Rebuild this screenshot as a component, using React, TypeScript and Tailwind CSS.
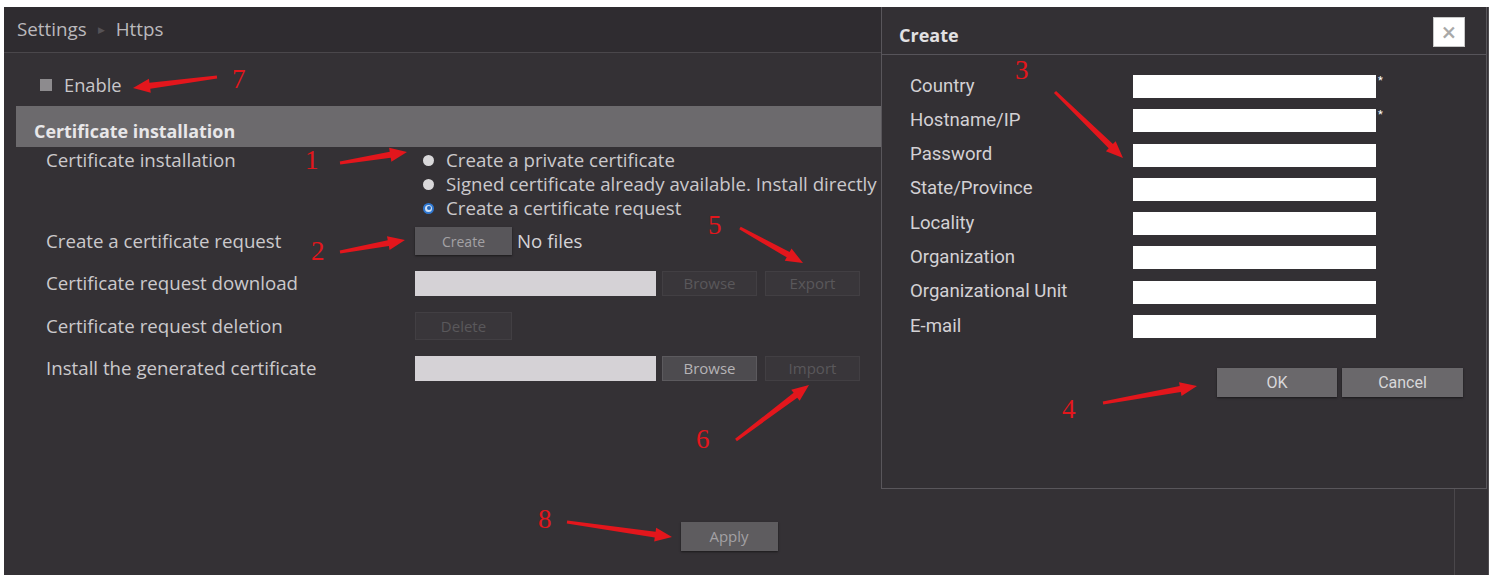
import React from 'react';

const mainFont = { fontFamily: '"Open Sans", "Liberation Sans", sans-serif' };
const dlgFont = { fontFamily: 'Roboto, "Liberation Sans", sans-serif' };

type BtnProps = { label: string; disabled?: boolean; className?: string };

const Btn = ({ label, disabled, className = '' }: BtnProps) => (
  <div
    className={`flex items-center justify-center text-[15px] ${
      disabled
        ? 'bg-[#39363a] border border-[#423f43] text-[#5a585b]'
        : 'bg-[#4d4b4f] border border-[#5c5a5e] text-[#b5b3b6]'
    } ${className}`}
  >
    {label}
  </div>
);

const Radio = ({ checked, label }: { checked?: boolean; label: string }) => (
  <div className="flex h-[24px] items-center">
    {checked ? (
      <span className="ml-[8px] flex h-[11px] w-[11px] items-center justify-center rounded-full border-2 border-[#2f78d2] bg-[#cfe0f5]">
        <span className="h-[4px] w-[4px] rounded-full bg-[#2466b8]" />
      </span>
    ) : (
      <span className="ml-[8px] h-[11px] w-[11px] rounded-full bg-[#d9d8da]" />
    )}
    <span className="ml-[12px]">{label}</span>
  </div>
);

const fields = [
  { name: 'Country', required: true },
  { name: 'Hostname/IP', required: true },
  { name: 'Password' },
  { name: 'State/Province' },
  { name: 'Locality' },
  { name: 'Organization' },
  { name: 'Organizational Unit' },
  { name: 'E-mail' },
];

// red annotation arrows from the manual: tail -> tip
const arrows = [
  [217, 77, 133, 88],
  [340, 163, 407, 152],
  [340, 252, 405, 240],
  [740, 228, 803, 263],
  [736, 440, 809, 385],
  [567, 522, 672, 537],
  [1055, 92, 1123, 158],
  [1103, 403, 1197, 386],
];

const marks = [
  { n: '7', x: 232, y: 88 },
  { n: '1', x: 305, y: 169 },
  { n: '2', x: 311, y: 260 },
  { n: '5', x: 708, y: 234 },
  { n: '6', x: 696, y: 448 },
  { n: '8', x: 538, y: 528 },
  { n: '3', x: 1015, y: 79 },
  { n: '4', x: 1062, y: 418 },
];

const arrowPoints = ([x1, y1, x2, y2]: number[]) => {
  const len = Math.hypot(x2 - x1, y2 - y1);
  const ux = (x2 - x1) / len;
  const uy = (y2 - y1) / len;
  const nx = -uy;
  const ny = ux;
  const bx = x2 - ux * 17;
  const by = y2 - uy * 17;
  const p = (x: number, y: number, w: number) => `${x + nx * w},${y + ny * w}`;
  return [
    p(x1, y1, 1.5),
    p(bx, by, 3),
    p(bx, by, 7),
    `${x2},${y2}`,
    p(bx, by, -7),
    p(bx, by, -3),
    p(x1, y1, -1.5),
  ].join(' ');
};

const App = () => {
  return (
    <div className="relative h-[578px] w-[1493px] overflow-hidden bg-white pt-[7px] pl-[4px] pr-[4px] pb-[3px]">
      <div className="relative flex h-full border-r border-[#4f4c50] bg-[#343135]" style={mainFont}>
        {/* Main settings area */}
        <div className="flex h-full w-[1451px] flex-col border-r border-[#4a474b]">
          {/* Breadcrumb */}
          <div className="flex h-[46px] items-center border-b border-[#4a474b] bg-[#2f2c30] pl-[13px] text-[18.8px] text-[#bbb9bc]">
            <span>Settings</span>
            <span className="mx-[11px] text-[9px] text-[#555256]">▶</span>
            <span>Https</span>
          </div>

          {/* Enable */}
          <div className="mt-[20px] flex h-[24px] items-center pl-[36px] text-[18.3px] text-[#c9c7ca]">
            <span className="h-[12px] w-[12px] bg-[#8d8b8e]" />
            <span className="ml-[12px]">Enable</span>
          </div>

          {/* Section bar */}
          <div className="mt-[9px] ml-[12px] flex h-[41px] items-end bg-[#6c6a6d] pb-[2px] pl-[18px] text-[17.9px] font-bold text-[#e8e7e9]">
            Certificate installation
          </div>

          {/* Form rows */}
          <div className="mt-[1px] grid grid-cols-[369px_1fr] pl-[42px] text-[18.7px] text-[#cbc9cc]">
            <div className="flex h-[24px] items-center">Certificate installation</div>
            <div className="flex flex-col">
              <Radio label="Create a private certificate" />
              <Radio label="Signed certificate already available. Install directly" />
              <Radio checked label="Create a certificate request" />
            </div>

            <div className="mt-[7px] flex h-[28px] items-center">Create a certificate request</div>
            <div className="mt-[7px] flex h-[28px] items-center">
              <div className="flex h-[28px] w-[97px] items-center justify-center bg-[#58565a] text-[14px] text-[#a4a2a5] shadow-[0_1px_2px_rgba(0,0,0,0.5)]">
                Create
              </div>
              <span className="ml-[5px] text-[#d6d4d7]">No files</span>
            </div>

            <div className="mt-[16px] flex h-[25px] items-center">Certificate request download</div>
            <div className="mt-[16px] flex h-[25px] items-center">
              <div className="h-[25px] w-[241px] bg-[#d5d2d6]" />
              <Btn label="Browse" disabled className="ml-[6px] h-[25px] w-[95px]" />
              <Btn label="Export" disabled className="ml-[8px] h-[25px] w-[95px]" />
            </div>

            <div className="mt-[16px] flex h-[28px] items-center">Certificate request deletion</div>
            <div className="mt-[16px] flex h-[28px] items-center">
              <Btn label="Delete" disabled className="h-[28px] w-[97px]" />
            </div>

            <div className="mt-[16px] flex h-[25px] items-center">Install the generated certificate</div>
            <div className="mt-[16px] flex h-[25px] items-center">
              <div className="h-[25px] w-[241px] bg-[#d5d2d6]" />
              <Btn label="Browse" className="ml-[6px] h-[25px] w-[95px]" />
              <Btn label="Import" disabled className="ml-[8px] h-[25px] w-[95px]" />
            </div>
          </div>

          <div className="mt-[141px] flex justify-center">
            <div className="flex h-[29px] w-[97px] items-center justify-center bg-[#5e5c5f] text-[15px] text-[#a3a1a4] shadow-[0_1px_2px_rgba(0,0,0,0.5)]">
              Apply
            </div>
          </div>
        </div>

        {/* Create dialog */}
        <div className="absolute left-[877px] top-0 flex h-[482px] w-[606px] flex-col border border-t-0 border-[#59565b] bg-[#333034]" style={dlgFont}>
          <div className="relative h-[48px] border-b border-[#57545a]">
            <span className="absolute left-[17px] top-[16px] text-[18px] font-bold leading-[24px] text-[#e2e1e3]" style={mainFont}>
              Create
            </span>
            <div className="absolute right-[21px] top-[10px] flex h-[30px] w-[32px] items-center justify-center border border-[#c8c8c8] bg-white text-[26px] leading-none text-[#a8a8a8]">
              ×
            </div>
          </div>

          <div className="mt-[20px] flex flex-col gap-[11.3px] pl-[28px] text-[18.6px] text-[#d3d1d4]">
            {fields.map((f) => (
              <div key={f.name} className="flex h-[23px] items-center">
                <span className="w-[223px]">{f.name}</span>
                <div className="h-[23px] w-[243px] bg-white" />
                {f.required && <span className="ml-[2px] self-start text-[11px] leading-[12px] text-white">*</span>}
              </div>
            ))}
          </div>

          <div className="mt-[30px] flex justify-end gap-[5px] pr-[23px] text-[16px] text-[#d8d7d9]">
            <div className="flex h-[29px] w-[120px] items-center justify-center bg-[#6a686b] shadow-[0_1px_2px_rgba(0,0,0,0.5)]">OK</div>
            <div className="flex h-[29px] w-[121px] items-center justify-center bg-[#6a686b] shadow-[0_1px_2px_rgba(0,0,0,0.5)]">Cancel</div>
          </div>
        </div>
      </div>

      {/* Annotations */}
      <svg className="pointer-events-none absolute left-0 top-0" width="1493" height="578" viewBox="0 0 1493 578">
        {arrows.map((a, i) => (
          <polygon key={i} points={arrowPoints(a)} fill="#e3161c" />
        ))}
        {marks.map((m) => (
          <text key={m.n} x={m.x} y={m.y} fill="#e3161c" fontSize="27" fontFamily='"Liberation Serif", serif'>
            {m.n}
          </text>
        ))}
      </svg>
    </div>
  );
};

export default App;
